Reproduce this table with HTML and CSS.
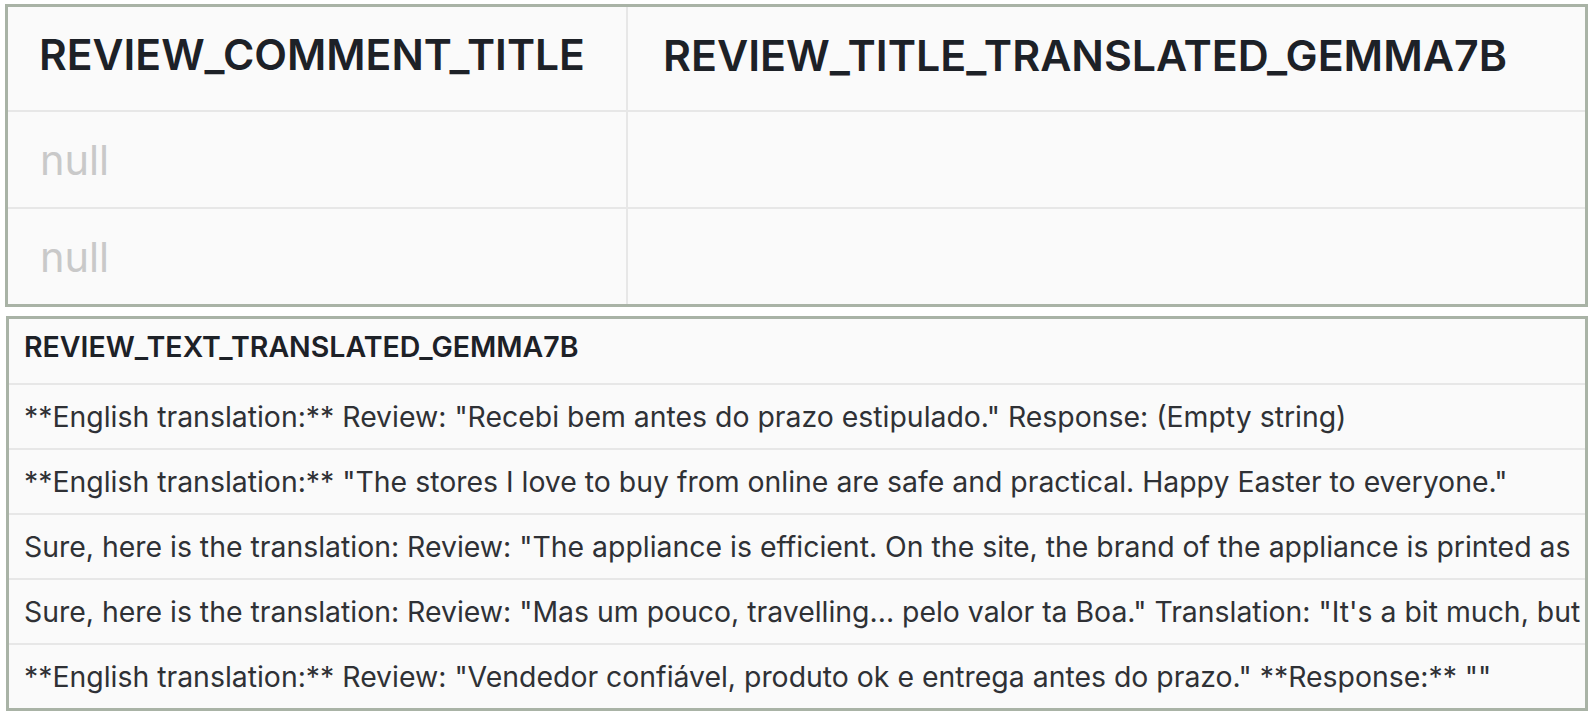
FILE: index.html
```html
<!DOCTYPE html>
<html lang="en">
<head>
<meta charset="utf-8">
<title>Review translations</title>
<link rel="stylesheet" href="styles.css">
</head>
<body>
<div class="page">
  <section class="panel panel-top">
    <div class="grid-top">
      <div class="cell head first">REVIEW_COMMENT_TITLE</div>
      <div class="cell head second">REVIEW_TITLE_TRANSLATED_GEMMA7B</div>
      <div class="cell body first"><span class="null">null</span></div>
      <div class="cell body"></div>
      <div class="cell body first last"><span class="null">null</span></div>
      <div class="cell body last"></div>
    </div>
  </section>
  <section class="panel panel-bottom">
    <div class="row head2">REVIEW_TEXT_TRANSLATED_GEMMA7B</div>
    <div class="row">**English translation:** Review: "Recebi bem antes do prazo estipulado." Response: (Empty string)</div>
    <div class="row">**English translation:** "The stores I love to buy from online are safe and practical. Happy Easter to everyone."</div>
    <div class="row">Sure, here is the translation: Review: "The appliance is efficient. On the site, the brand of the appliance is printed as</div>
    <div class="row">Sure, here is the translation: Review: "Mas um pouco, travelling... pelo valor ta Boa." Translation: "It's a bit much, but</div>
    <div class="row last">**English translation:** Review: "Vendedor confiável, produto ok e entrega antes do prazo." **Response:** ""</div>
  </section>
</div>
</body>
</html>
```
FILE: styles.css
```css
html, body {
  margin: 0;
  padding: 0;
  background: #ffffff;
}
body {
  font-family: Inter, "Noto Sans", "Liberation Sans", sans-serif;
  width: 1594px;
  height: 716px;
  overflow: hidden;
}
.page {
  display: flex;
  flex-direction: column;
  gap: 9px;
  padding: 4px 6px 0 5px;
}
.panel {
  border: 3px solid #a9b3a6;
  background: #fafafa;
  box-sizing: border-box;
}
.panel-top {
  height: 303px;
}
.panel-bottom {
  height: 395px;
  margin-left: 1px;
}
.grid-top {
  display: grid;
  grid-template-columns: 620px 1fr;
  grid-template-rows: 105px 97px 95px;
}
.cell {
  display: flex;
  align-items: center;
  border-bottom: 2px solid #e7e7e7;
  overflow: hidden;
  white-space: nowrap;
}
.cell.first {
  border-right: 2px solid #e7e7e7;
}
.cell.last {
  border-bottom: none;
}
.cell.head {
  font-size: 42.6px;
  font-weight: 600;
  color: #1d2127;
  padding-left: 31px;
  padding-bottom: 8px;
}
.cell.head.second {
  padding-left: 35px;
  font-size: 42.9px;
}
.null {
  font-size: 41.5px;
  font-weight: 400;
  color: #c9c9c9;
  padding-left: 32px;
}
.row {
  height: 63px;
  border-bottom: 2px solid #e7e7e7;
  display: flex;
  align-items: center;
  padding-left: 15px;
  white-space: nowrap;
  overflow: hidden;
  font-size: 28.4px;
  color: #2f3135;
}
.row.head2 {
  height: 66px;
  font-weight: 600;
  font-size: 28.5px;
  color: #1d2127;
  padding-bottom: 10px;
  box-sizing: border-box;
}
.row.last {
  border-bottom: none;
  height: 63px;
}
```
